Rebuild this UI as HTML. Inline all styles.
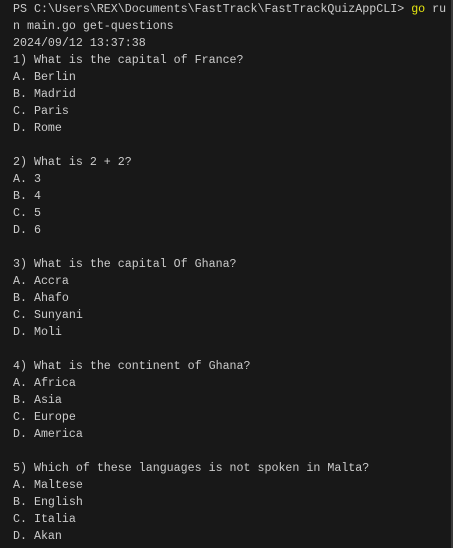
<!DOCTYPE html>
<html><head><style>
html,body{margin:0;padding:0;background:#181818;width:453px;height:548px;overflow:hidden}
pre{margin:0;padding:1px 0 0 13px;font-family:"Liberation Mono",monospace;font-size:11.65px;line-height:17px;color:#cccccc;white-space:pre}
.y{color:#e5e510}
.sb{position:absolute;right:0;top:0;width:2px;height:548px;background:#3a3a3a}
</style></head><body>
<pre>PS C:\Users\REX\Documents\FastTrack\FastTrackQuizAppCLI&gt; <span class="y">go</span> ru
n main.go get-questions
2024/09/12 13:37:38
1) What is the capital of France?
A. Berlin
B. Madrid
C. Paris
D. Rome

2) What is 2 + 2?
A. 3
B. 4
C. 5
D. 6

3) What is the capital Of Ghana?
A. Accra
B. Ahafo
C. Sunyani
D. Moli

4) What is the continent of Ghana?
A. Africa
B. Asia
C. Europe
D. America

5) Which of these languages is not spoken in Malta?
A. Maltese
B. English
C. Italia
D. Akan</pre>
<div class="sb"></div>
</body></html>
